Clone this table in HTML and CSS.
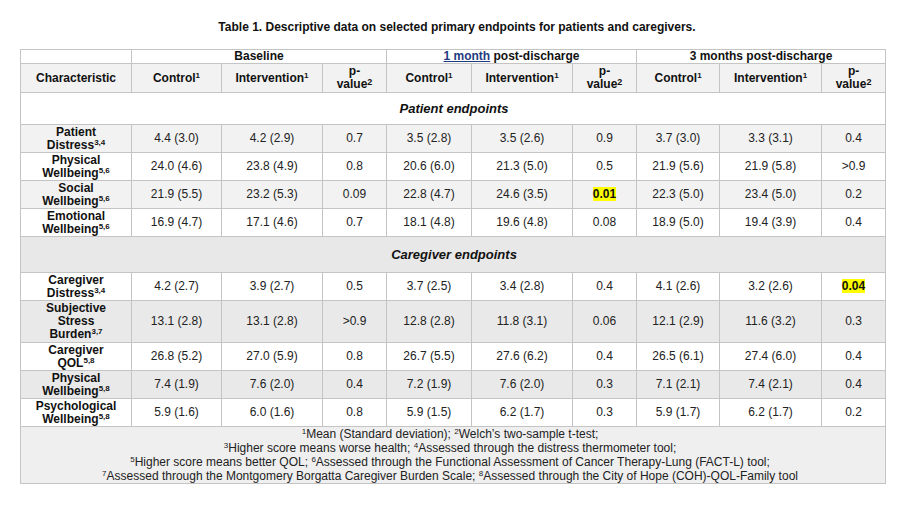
FILE: index.html
```html
<!DOCTYPE html>
<html>
<head>
<meta charset="utf-8">
<link rel="stylesheet" href="styles.css">
</head>
<body>
<div class="title">Table 1. Descriptive data on selected primary endpoints for patients and caregivers.</div>
<table class="tbl">
  <colgroup>
    <col class="c-char"><col class="c-ctl"><col class="c-int"><col class="c-p">
    <col class="c-ctl2"><col class="c-int"><col class="c-p">
    <col class="c-ctl3"><col class="c-int3"><col class="c-p">
  </colgroup>
  <tr class="h1">
    <td></td>
    <td colspan="3" class="hd">Baseline</td>
    <td colspan="3" class="hd"><span class="link">1 month</span> post-discharge</td>
    <td colspan="3" class="hd">3 months post-discharge</td>
  </tr>
  <tr class="h2">
    <td class="hd">Characteristic</td>
    <td class="hd">Control<span class="sup">1</span></td>
    <td class="hd">Intervention<span class="sup">1</span></td>
    <td class="hd">p-<br>value<span class="sup2">2</span></td>
    <td class="hd">Control<span class="sup">1</span></td>
    <td class="hd">Intervention<span class="sup">1</span></td>
    <td class="hd">p-<br>value<span class="sup2">2</span></td>
    <td class="hd">Control<span class="sup">1</span></td>
    <td class="hd">Intervention<span class="sup">1</span></td>
    <td class="hd">p-<br>value<span class="sup2">2</span></td>
  </tr>
  <tr class="sec sec-p">
    <td colspan="10">Patient endpoints</td>
  </tr>
  <tr class="row alt">
    <td class="lab">Patient<br>Distress<span class="sup">3,4</span></td>
    <td>4.4 (3.0)</td><td>4.2 (2.9)</td><td>0.7</td>
    <td>3.5 (2.8)</td><td>3.5 (2.6)</td><td>0.9</td>
    <td>3.7 (3.0)</td><td>3.3 (3.1)</td><td>0.4</td>
  </tr>
  <tr class="row">
    <td class="lab">Physical<br>Wellbeing<span class="sup">5,6</span></td>
    <td>24.0 (4.6)</td><td>23.8 (4.9)</td><td>0.8</td>
    <td>20.6 (6.0)</td><td>21.3 (5.0)</td><td>0.5</td>
    <td>21.9 (5.6)</td><td>21.9 (5.8)</td><td>&gt;0.9</td>
  </tr>
  <tr class="row alt">
    <td class="lab">Social<br>Wellbeing<span class="sup">5,6</span></td>
    <td>21.9 (5.5)</td><td>23.2 (5.3)</td><td>0.09</td>
    <td>22.8 (4.7)</td><td>24.6 (3.5)</td><td><span class="hl">0.01</span></td>
    <td>22.3 (5.0)</td><td>23.4 (5.0)</td><td>0.2</td>
  </tr>
  <tr class="row">
    <td class="lab">Emotional<br>Wellbeing<span class="sup">5,6</span></td>
    <td>16.9 (4.7)</td><td>17.1 (4.6)</td><td>0.7</td>
    <td>18.1 (4.8)</td><td>19.6 (4.8)</td><td>0.08</td>
    <td>18.9 (5.0)</td><td>19.4 (3.9)</td><td>0.4</td>
  </tr>
  <tr class="sec sec-c">
    <td colspan="10">Caregiver endpoints</td>
  </tr>
  <tr class="row">
    <td class="lab">Caregiver<br>Distress<span class="sup">3,4</span></td>
    <td>4.2 (2.7)</td><td>3.9 (2.7)</td><td>0.5</td>
    <td>3.7 (2.5)</td><td>3.4 (2.8)</td><td>0.4</td>
    <td>4.1 (2.6)</td><td>3.2 (2.6)</td><td><span class="hl">0.04</span></td>
  </tr>
  <tr class="row alt2 tall">
    <td class="lab">Subjective<br>Stress<br>Burden<span class="sup">3,7</span></td>
    <td>13.1 (2.8)</td><td>13.1 (2.8)</td><td>&gt;0.9</td>
    <td>12.8 (2.8)</td><td>11.8 (3.1)</td><td>0.06</td>
    <td>12.1 (2.9)</td><td>11.6 (3.2)</td><td>0.3</td>
  </tr>
  <tr class="row">
    <td class="lab">Caregiver<br>QOL<span class="sup">5,8</span></td>
    <td>26.8 (5.2)</td><td>27.0 (5.9)</td><td>0.8</td>
    <td>26.7 (5.5)</td><td>27.6 (6.2)</td><td>0.4</td>
    <td>26.5 (6.1)</td><td>27.4 (6.0)</td><td>0.4</td>
  </tr>
  <tr class="row alt2">
    <td class="lab">Physical<br>Wellbeing<span class="sup">5,8</span></td>
    <td>7.4 (1.9)</td><td>7.6 (2.0)</td><td>0.4</td>
    <td>7.2 (1.9)</td><td>7.6 (2.0)</td><td>0.3</td>
    <td>7.1 (2.1)</td><td>7.4 (2.1)</td><td>0.4</td>
  </tr>
  <tr class="row">
    <td class="lab">Psychological<br>Wellbeing<span class="sup">5,8</span></td>
    <td>5.9 (1.6)</td><td>6.0 (1.6)</td><td>0.8</td>
    <td>5.9 (1.5)</td><td>6.2 (1.7)</td><td>0.3</td>
    <td>5.9 (1.7)</td><td>6.2 (1.7)</td><td>0.2</td>
  </tr>
  <tr class="foot">
    <td colspan="10"><span class="sup">1</span>Mean (Standard deviation); <span class="sup">2</span>Welch’s two-sample t-test;<br><span class="sup">3</span>Higher score means worse health; <span class="sup">4</span>Assessed through the distress thermometer tool;<br><span class="sup">5</span>Higher score means better QOL; <span class="sup">6</span>Assessed through the Functional Assessment of Cancer Therapy-Lung (FACT-L) tool;<br><span class="sup">7</span>Assessed through the Montgomery Borgatta Caregiver Burden Scale; <span class="sup">8</span>Assessed through the City of Hope (COH)-QOL-Family tool</td>
  </tr>
</table>
</body>
</html>
```
FILE: styles.css
```css
html, body {
  margin: 0;
  padding: 0;
  background: #ffffff;
}
body {
  font-family: "Liberation Sans", Arial, sans-serif;
  color: #111111;
  width: 913px;
  height: 521px;
  overflow: hidden;
}
.title {
  font-weight: bold;
  font-size: 12px;
  line-height: 14px;
  text-align: center;
  padding-top: 20px;
  height: 14px;
  margin-bottom: 15px;
  padding-left: 1px;
}
.tbl {
  border-collapse: collapse;
  table-layout: fixed;
  width: 866px;
  margin-left: 20px;
  font-size: 12px;
  line-height: 13px;
}
.c-char { width: 111px; }
.c-ctl { width: 90px; }
.c-int { width: 101px; }
.c-p { width: 64px; }
.c-ctl2 { width: 85px; }
.c-ctl3 { width: 83px; }
.c-int3 { width: 102px; }
.tbl td {
  border: 1px solid #c4c4c4;
  padding: 0;
  text-align: center;
  vertical-align: middle;
  overflow: hidden;
}
.hd {
  font-weight: bold;
}
.h1 td {
  height: 13px;
  background: #ffffff;
}
.h2 td {
  height: 28px;
  background: #f2f2f2;
}
.link {
  color: #1f3b80;
  text-decoration: underline;
}
.sup {
  font-size: 8px;
  line-height: 0;
  vertical-align: 4px;
}
.sup2 {
  font-size: 9px;
  line-height: 0;
  vertical-align: 3px;
}
.sec td {
  font-weight: bold;
  font-style: italic;
  font-size: 13px;
  padding-left: 2px;
}
.sec-p td {
  height: 31px;
  background: #ffffff;
}
.sec-c td {
  height: 35px;
  background: #e8e8e8;
}
.row td {
  height: 27px;
  background: #ffffff;
  color: #222222;
}
.row.alt td {
  background: #f2f2f2;
}
.row.alt2 td {
  background: #e9e9e9;
}
.row.tall td {
  height: 41px;
}
.row td.lab {
  font-weight: bold;
  color: #111111;
}
.hl {
  background: #ffff00;
  font-weight: bold;
  color: #111111;
}
.foot td {
  background: #efefef;
  height: 54px;
  line-height: 14px;
  font-size: 12px;
  color: #222222;
  padding-right: 6px;
}
```
